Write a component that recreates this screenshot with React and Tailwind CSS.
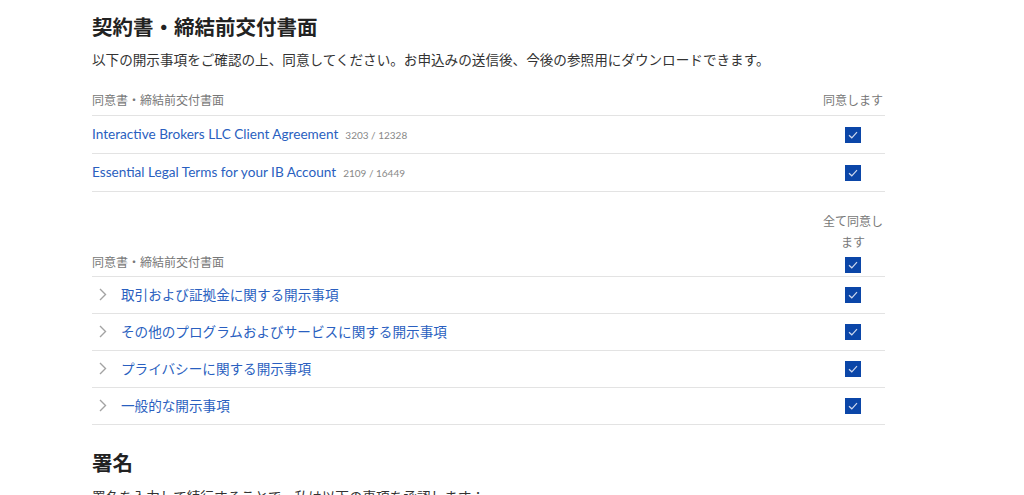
import React from "react";

const font = { fontFamily: '"Lato", "Noto Sans CJK JP", sans-serif' };

function Check() {
  return (
    <span className="flex w-4 h-4 items-center justify-center bg-[#0b46a8]">
      <svg width="10" height="8" viewBox="0 0 10 8" fill="none">
        <path d="M1 4.2 L3.8 6.8 L9 1.2" stroke="#cfd9ee" strokeWidth="1.2" />
      </svg>
    </span>
  );
}

function Chevron() {
  return (
    <svg width="8" height="13" viewBox="0 0 8 13" fill="none" className="mr-[14px]">
      <path d="M1 1 L6.5 6.5 L1 12" stroke="#a3a3a3" strokeWidth="1.4" />
    </svg>
  );
}

const docs = [
  { name: "Interactive Brokers LLC Client Agreement", num: "3203 / 12328" },
  { name: "Essential Legal Terms for your IB Account", num: "2109 / 16449" },
];

const disclosures = [
  "取引および証拠金に関する開示事項",
  "その他のプログラムおよびサービスに関する開示事項",
  "プライバシーに関する開示事項",
  "一般的な開示事項",
];

export default function App() {
  return (
    <div className="bg-white h-[495px] overflow-hidden text-[#333]" style={font}>
      <div className="pl-[92px] w-[885px]">
        <h1 className="pt-[12px] text-[20.5px] font-bold text-[#222] leading-[30px]">契約書・締結前交付書面</h1>
        <p className="mt-[9px] text-[13.6px] leading-[18px] text-[#333]">
          以下の開示事項をご確認の上、同意してください。お申込みの送信後、今後の参照用にダウンロードできます。
        </p>

        <div className="mt-[15px]">
          <div className="flex items-end border-b border-[#e3e3e3] h-[32px] pb-[5px]">
            <div className="flex-1 text-[12px] text-[#777]">同意書・締結前交付書面</div>
            <div className="w-[64px] text-center text-[12px] text-[#777]">同意します</div>
          </div>
          {docs.map((d) => (
            <div key={d.name} className="flex items-center h-[38px] border-b border-[#e3e3e3]">
              <div className="flex-1 flex items-baseline">
                <span className="text-[13.6px] text-[#2a5fc0]">{d.name}</span>
                <span className="ml-[7px] text-[10px] text-[#888]">{d.num}</span>
              </div>
              <div className="w-[64px] flex justify-center">
                <Check />
              </div>
            </div>
          ))}
        </div>

        <div className="mt-[19px]">
          <div className="flex items-end border-b border-[#e3e3e3] pb-[3px]">
            <div className="flex-1 text-[12px] text-[#777] leading-[18px] pb-[1px]">同意書・締結前交付書面</div>
            <div className="w-[64px] flex flex-col items-center">
              <div className="text-[12px] leading-[21px] text-[#777] text-center px-[2px]">全て同意します</div>
              <div className="mt-[4px]">
                <Check />
              </div>
            </div>
          </div>
          {disclosures.map((t) => (
            <div key={t} className="flex items-center h-[37px] border-b border-[#e3e3e3]">
              <div className="flex-1 flex items-center pl-[7px]">
                <Chevron />
                <span className="text-[13.6px] text-[#2a5fc0]">{t}</span>
              </div>
              <div className="w-[64px] flex justify-center">
                <Check />
              </div>
            </div>
          ))}
        </div>

        <h2 className="mt-[23px] text-[20.5px] font-bold text-[#222] leading-[30px]">署名</h2>
        <p className="mt-[10px] text-[13.6px] leading-[18px]">
          署名を入力して続行することで、私は以下の事項を承認します：
        </p>
      </div>
    </div>
  );
}
